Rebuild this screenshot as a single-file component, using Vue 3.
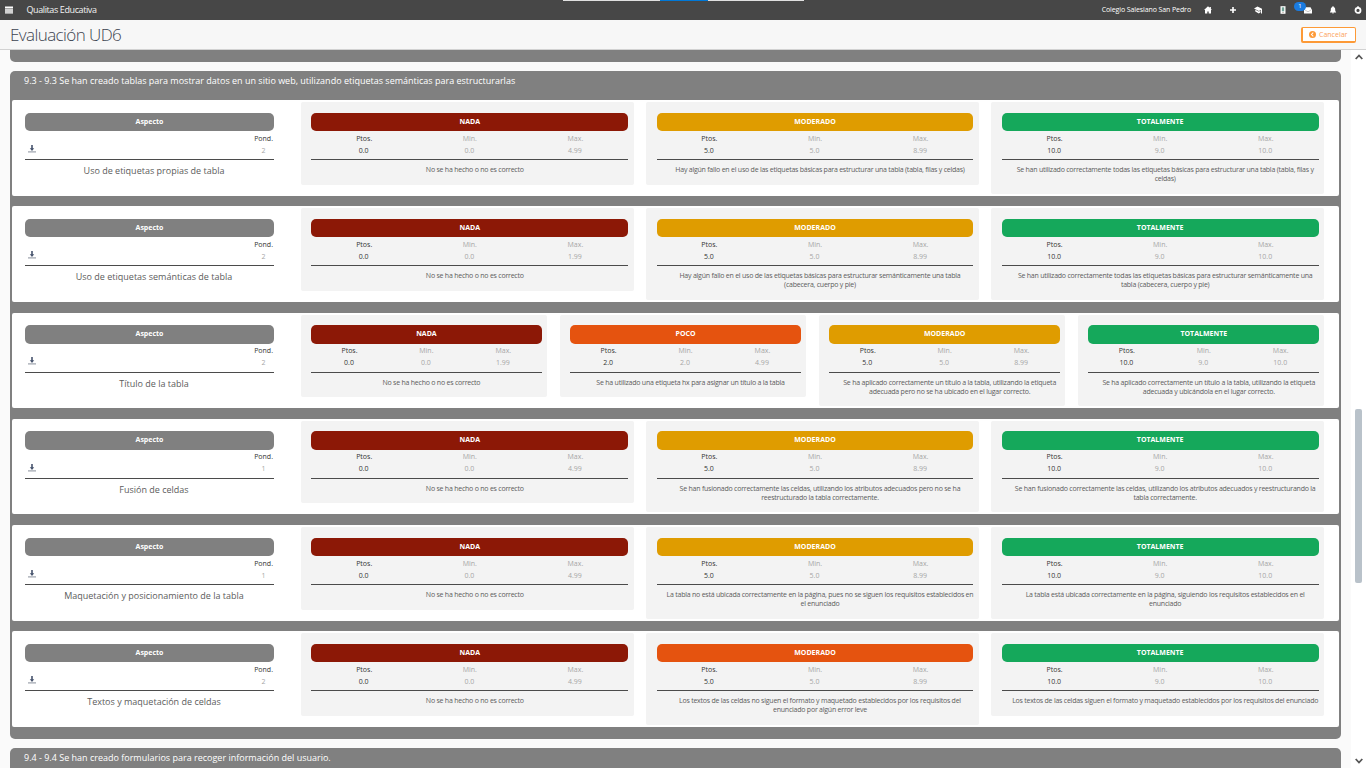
<script setup>
const level = (kind, name, pts, min, max, lines) => ({ kind, name, pts, min, max, lines })
const nada = (max) => level('nada', 'NADA', '0.0', '0.0', max, ['No se ha hecho o no es correcto'])
const moderado = (lines, kind = 'moderado') => level(kind, 'MODERADO', '5.0', '5.0', '8.99', lines)
const total = (lines) => level('total', 'TOTALMENTE', '10.0', '9.0', '10.0', lines)

const rows = [
  { title: 'Uso de etiquetas propias de tabla', weight: 2, levels: [
    nada('4.99'),
    moderado(['Hay algún fallo en el uso de las etiquetas básicas para estructurar una tabla (tabla, filas y celdas)']),
    total(['Se han utilizado correctamente todas las etiquetas básicas para estructurar una tabla (tabla, filas y', 'celdas)'])
  ] },
  { title: 'Uso de etiquetas semánticas de tabla', weight: 2, levels: [
    nada('1.99'),
    moderado(['Hay algún fallo en el uso de las etiquetas básicas para estructurar semánticamente una tabla', '(cabecera, cuerpo y pie)']),
    total(['Se han utilizado correctamente todas las etiquetas básicas para estructurar semánticamente una', 'tabla (cabecera, cuerpo y pie)'])
  ] },
  { title: 'Título de la tabla', weight: 2, levels: [
    nada('1.99'),
    level('poco', 'POCO', '2.0', '2.0', '4.99', ['Se ha utilizado una etiqueta hx para asignar un título a la tabla']),
    moderado(['Se ha aplicado correctamente un título a la tabla, utilizando la etiqueta', 'adecuada pero no se ha ubicado en el lugar correcto.']),
    total(['Se ha aplicado correctamente un título a la tabla, utilizando la etiqueta', 'adecuada y ubicándola en el lugar correcto.'])
  ] },
  { title: 'Fusión de celdas', weight: 1, levels: [
    nada('4.99'),
    moderado(['Se han fusionado correctamente las celdas, utilizando los atributos adecuados pero no se ha', 'reestructurado la tabla correctamente.']),
    total(['Se han fusionado correctamente las celdas, utilizando los atributos adecuados y reestructurando la', 'tabla correctamente.'])
  ] },
  { title: 'Maquetación y posicionamiento de la tabla', weight: 1, levels: [
    nada('4.99'),
    moderado(['La tabla no está ubicada correctamente en la página, pues no se siguen los requisitos establecidos en', 'el enunciado']),
    total(['La tabla está ubicada correctamente en la página, siguiendo los requisitos establecidos en el', 'enunciado'])
  ] },
  { title: 'Textos y maquetación de celdas', weight: 2, levels: [
    nada('4.99'),
    moderado(['Los textos de las celdas no siguen el formato y maquetado establecidos por los requisitos del', 'enunciado por algún error leve'], 'poco'),
    total(['Los textos de las celdas siguen el formato y maquetado establecidos por los requisitos del enunciado'])
  ] }
]
</script>

<template>
  <div class="page">
    <header class="topbar">
      <svg class="menu" viewBox="0 0 8 8"><path d="M0 .5h8v1.400H0zM0 2.400h8v1.400H0zM0 4.300h8v1.400H0zM0 6.200h8v1.400H0z" /></svg>
      <span class="brand">Qualitas Educativa</span>
      <div class="loader"><i></i></div>
      <span class="school">Colegio Salesiano San Pedro</span>
      <nav class="icons">
        <svg viewBox="0 0 8 8"><path d="M4 .3 0 4.100h1v3.500h2.300V5.500h1.400v2.100H7V4.100h1L6.900 3V.9H5.600v.9z" /></svg>
        <svg viewBox="0 0 8 8"><path d="M3.200 1h1.600v2.200H7v1.600H4.800V7H3.200V4.800H1V3.200h2.200z" /></svg>
        <svg viewBox="0 0 8 8"><path d="M0 2.500 3.500.6 8 2.700v4.900H7V4L4.800 5z" /><path d="M1.300 3.700 4.800 5.500l1.700-.8v1.600L4.800 7.400 1.300 5.600z" /></svg>
        <svg viewBox="0 0 8 8"><path d="M1.500.2h5v7.600h-5z" /><path d="M2.800 1.300h2.400v4H2.800z" fill="#6fa296" /><path d="M3.500 6.200h1v.8h-1z" fill="#8a6d5a" /></svg>
        <span class="mail">
          <svg viewBox="0 0 8 8"><path d="M0 4 1.500 1.200h5L8 4v3.600H0z" /><path d="m1 4 3 1.800L7 4" fill="none" stroke="#aaa" stroke-width=".6" /></svg>
          <b class="badge">1</b>
        </span>
        <svg viewBox="0 0 8 8"><path d="M3.400.2h1.200v.9C6 1.500 6.200 2.500 6.200 4c0 1 .5 1.500 1 2.400H.8C1.300 5.500 1.800 5 1.800 4c0-1.500.2-2.500 1.600-2.900zM2.900 6.700h2.200L4 7.800z" /></svg>
        <svg viewBox="0 0 8 8"><circle cx="4" cy="4.400" r="2.500" fill="none" stroke="#fff" stroke-width="1.800" /><path d="M3.200.2h1.600v2H3.200z" /></svg>
      </nav>
    </header>

    <div class="titlebar">
      <h1>Evaluación UD6</h1>
      <button class="cancel">
        <svg viewBox="0 0 8 8"><circle cx="4" cy="4" r="4" fill="#fd9a37" /><path d="M4.900 1.900 2.800 4l2.100 2.100" fill="none" stroke="#fff" stroke-width="1.200" /></svg>
        <span>Cancelar</span>
      </button>
    </div>

    <div class="body">
      <main class="content">
        <section class="group previous"></section>
        <section class="group current">
          <h2>9.3 - 9.3 Se han creado tablas para mostrar datos en un sitio web, utilizando etiquetas semánticas para estructurarlas</h2>
          <div class="rows">
            <article v-for="row in rows" :key="row.title" class="row">
              <div class="aspect">
                <div class="pill grey">Aspecto</div>
                <div class="meta">
                  <svg class="download" viewBox="0 0 8 8"><path d="M0 6h8v1.700H0z" fill="#b9bdc4" /><path d="M3.200 0h1.600v3.300h1.400L4 6 1.800 3.300h1.400z" fill="#46536d" /></svg>
                  <div class="weight"><span>Pond.</span><span class="soft">{{ row.weight }}</span></div>
                </div>
                <div class="aspect-title">{{ row.title }}</div>
              </div>
              <div class="levels" :class="{ four: row.levels.length === 4 }">
                <div v-for="item in row.levels" :key="item.name" class="level">
                  <div class="pill" :class="item.kind">{{ item.name }}</div>
                  <div class="scores">
                    <div><span>Ptos.</span><span>{{ item.pts }}</span></div>
                    <div class="soft"><span>Min.</span><span>{{ item.min }}</span></div>
                    <div class="soft"><span>Max.</span><span>{{ item.max }}</span></div>
                  </div>
                  <div class="desc"><span v-for="line in item.lines" :key="line">{{ line }}</span></div>
                </div>
              </div>
            </article>
          </div>
        </section>
        <section class="group next">
          <h2>9.4 - 9.4 Se han creado formularios para recoger información del usuario.</h2>
        </section>
      </main>
      <aside class="scroll">
        <svg viewBox="0 0 8 6"><path d="M.7 5 4 1.500 7.300 5" /></svg>
        <i class="thumb"></i>
        <svg viewBox="0 0 8 6"><path d="M.7 1 4 4.500 7.300 1" /></svg>
      </aside>
    </div>
  </div>
</template>

<style>
body { margin: 0; overflow: hidden; }
</style>

<style scoped>
* { box-sizing: border-box; }
.page { width: 1366px; height: 768px; overflow: hidden; display: flex; flex-direction: column; background: #fafafa; color: #333; font-family: "Open Sans", "Noto Sans", sans-serif; font-size: 7px; white-space: nowrap; }
h1, h2 { margin: 0; }
svg { display: block; flex: none; }
.topbar { position: relative; flex: none; height: 20px; background: #474747; color: #fff; display: flex; align-items: center; padding: 0 4px 0 5px; }
.menu { width: 8px; height: 8px; fill: #fff; }
.brand { margin: -1px 0 0 13.500px; font-size: 9px; letter-spacing: -.4px; color: #f2f2f2; }
.loader { position: absolute; left: 563px; top: 0; width: 241px; height: 1px; background: #e0e0e0; display: flex; justify-content: center; }
.loader i { width: 48px; height: 1px; background: #0078d7; }
.school { margin: -1px 0 0 auto; font-size: 7px; letter-spacing: -.1px; }
.icons { display: flex; gap: 17px; margin-left: 13px; }
.icons svg { width: 8px; height: 8px; fill: #fff; }
.mail { position: relative; }
.badge { position: absolute; left: -10px; top: -4px; width: 12px; height: 9px; border-radius: 5px; background: #1a7be0; font-size: 6px; line-height: 8px; font-weight: 400; text-align: center; }
.titlebar { flex: none; height: 30px; background: #f7f7f7; border-bottom: 1px solid #d2d2d2; display: flex; align-items: center; justify-content: space-between; padding: 0 10px 0 10px; }
h1 { font-size: 17px; font-weight: 300; letter-spacing: -.58px; line-height: 29px; color: #3c4450; }
.cancel { width: 55px; height: 16px; padding: 0 0 0 6px; border: 1px solid #fd9a37; border-left-width: 2px; border-bottom-width: 2px; border-radius: 2px; background: #fff; color: #fba25b; font: 7px "Open Sans", sans-serif; display: flex; align-items: center; gap: 3px; }
.cancel svg { width: 7px; height: 7px; }
.body { flex: 1; min-height: 0; display: flex; }
.content { flex: 1; min-width: 0; padding: 0 10px; }
.group { background: #808080; border-radius: 5px; }
.previous { height: 12px; border-radius: 0 0 5px 5px; margin-bottom: 9px; }
.current { height: 668px; margin-bottom: 9px; }
.next { height: 30px; }
h2 { padding: 1px 14px 0; font-size: 9px; line-height: 18px; font-weight: 400; color: #fff; }
.rows { padding: 10.200px 2px 0; display: flex; flex-direction: column; gap: 10.750px; }
.row { height: 95.500px; background: #fff; border-radius: 2px; display: flex; align-items: flex-start; padding-top: 2px; }
.aspect { width: 249px; margin: 10.500px 27px 0 13px; flex: none; }
.levels { width: 1023.400px; display: grid; grid-template-columns: repeat(3, 333px); justify-content: space-between; align-items: start; }
.levels.four { grid-template-columns: repeat(4, 246px); }
.level { padding: 10.500px 5.800px 10.500px 10.400px; background: #f3f3f3; border-radius: 2px; }
.four .level { padding-left: 10px; padding-right: 5.200px; }
.pill { height: 18.500px; border-radius: 5px; color: #fff; font-size: 7px; line-height: 17px; font-weight: 700; text-align: center; }
.grey { background: #808080; }
.nada { background: #8c1806; }
.poco { background: #e5530f; }
.moderado { background: #df9c00; }
.total { background: #15a85b; }
.meta, .scores { height: 29px; border-bottom: 1px solid #4b4b4b; padding-top: 1.400px; display: flex; line-height: 12px; }
.meta { justify-content: space-between; }
.download { width: 8px; height: 8px; margin: 12.300px 0 0 3px; }
.weight { display: flex; flex-direction: column; align-items: center; margin-right: 1px; }
.scores > div { flex: 1; display: flex; flex-direction: column; align-items: center; }
.scores > div > span:last-child { margin-left: -1px; }
.soft { color: #a6a6a6; }
.aspect-title { padding: 3px 0 0 9px; font-size: 9px; line-height: 16px; text-align: center; color: #5c5c5c; }
.desc { display: flex; flex-direction: column; align-items: center; padding: 5px 0 0 10px; line-height: 9px; letter-spacing: -.23px; color: #5c5c5c; }
.scroll { width: 15px; background: #fff; display: flex; flex-direction: column; align-items: center; padding: 4px 0; }
.scroll svg { width: 8px; height: 6px; fill: none; stroke: #555; stroke-width: 1.800; }
.thumb { width: 7px; height: 174px; margin: 349px 0 auto; border-radius: 2px; background: #b9c2ca; }
</style>
